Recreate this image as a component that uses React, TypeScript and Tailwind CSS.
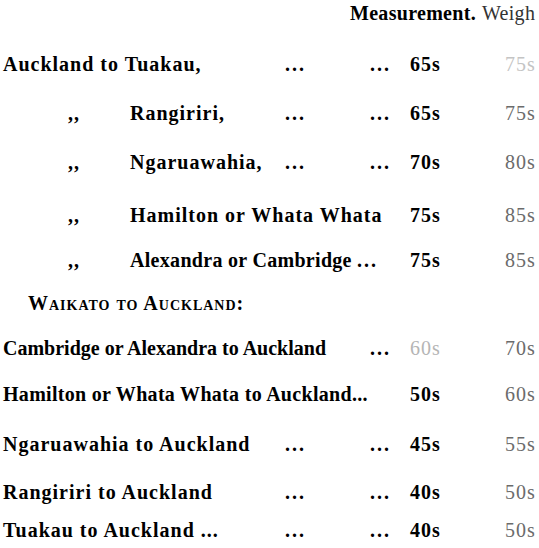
const grid = 'grid grid-cols-[65px_62px_155px_85px_40px_95px_1fr] pl-[3px] h-[26px] items-center whitespace-nowrap';

function Dots() {
  return <span className="tracking-[2px]">...</span>;
}

function Weight({ children, faint }: { children: string; faint?: boolean }) {
  return (
    <span className={faint ? 'font-normal tracking-[1px] text-[#c4c4c4]' : 'font-normal tracking-[1px] text-[#6b6b6b]'}>
      {children}
    </span>
  );
}

export default function App() {
  return (
    <div className="w-[539px] h-[548px] overflow-hidden bg-white text-black font-['Liberation_Serif','Times_New_Roman',serif] font-bold text-[20px] leading-[26px] tracking-[1px]">
      {/* column heads */}
      <div className="flex h-[26px] items-center pl-[350px] whitespace-nowrap tracking-[0.3px]">
        <span>Measurement.</span>
        <span className="ml-[6px] font-normal text-[#333]">Weigh</span>
      </div>

      {/* Auckland to Waikato */}
      <div className={`${grid} mt-[25px]`}>
        <span className="col-span-3">Auckland to Tuakau,</span>
        <Dots />
        <Dots />
        <span>65s</span>
        <Weight faint>75s</Weight>
      </div>

      <div className={`${grid} mt-[23px]`}>
        <span className="col-start-2">,,</span>
        <span>Rangiriri,</span>
        <Dots />
        <Dots />
        <span>65s</span>
        <Weight>75s</Weight>
      </div>

      <div className={`${grid} mt-[23px]`}>
        <span className="col-start-2">,,</span>
        <span>Ngaruawahia,</span>
        <Dots />
        <Dots />
        <span>70s</span>
        <Weight>80s</Weight>
      </div>

      <div className={`${grid} mt-[27px]`}>
        <span className="col-start-2">,,</span>
        <span className="col-span-3">Hamilton or Whata Whata</span>
        <span>75s</span>
        <Weight>85s</Weight>
      </div>

      <div className={`${grid} mt-[19px]`}>
        <span className="col-start-2">,,</span>
        <span className="col-span-3 tracking-[0.3px]">
          Alexandra or Cambridge <Dots />
        </span>
        <span>75s</span>
        <Weight>85s</Weight>
      </div>

      {/* Waikato to Auckland */}
      <div className="h-[26px] mt-[17px] pl-[28px] flex items-center whitespace-nowrap [font-variant:small-caps]">
        Waikato to Auckland:
      </div>

      <div className={`${grid} mt-[19px]`}>
        <span className="col-span-4 tracking-normal">Cambridge or Alexandra to Auckland</span>
        <Dots />
        <span className="text-[#b5b5b5] font-normal">60s</span>
        <Weight>70s</Weight>
      </div>

      <div className={`${grid} mt-[20px]`}>
        <span className="col-span-5 tracking-[0.3px]">Hamilton or Whata Whata to Auckland...</span>
        <span>50s</span>
        <Weight>60s</Weight>
      </div>

      <div className={`${grid} mt-[24px]`}>
        <span className="col-span-3">Ngaruawahia to Auckland</span>
        <Dots />
        <Dots />
        <span>45s</span>
        <Weight>55s</Weight>
      </div>

      <div className={`${grid} mt-[22px]`}>
        <span className="col-span-3">Rangiriri to Auckland</span>
        <Dots />
        <Dots />
        <span>40s</span>
        <Weight>50s</Weight>
      </div>

      <div className={`${grid} mt-[12px]`}>
        <span className="col-span-3">Tuakau to Auckland ...</span>
        <Dots />
        <Dots />
        <span>40s</span>
        <Weight>50s</Weight>
      </div>
    </div>
  );
}
